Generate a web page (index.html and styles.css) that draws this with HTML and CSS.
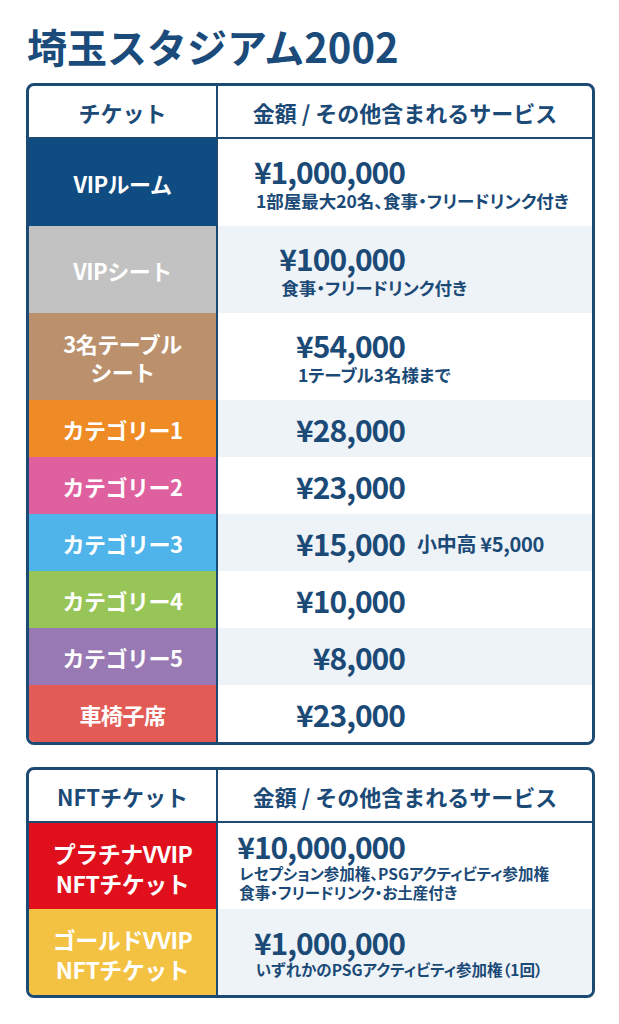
FILE: index.html
```html
<!DOCTYPE html>
<html lang="ja">
<head>
<meta charset="utf-8">
<title>埼玉スタジアム2002</title>
<link rel="stylesheet" href="styles.css">
</head>
<body>
<main class="page">
  <h1 class="title">埼玉スタジアム2002</h1>

  <section class="ticket-table">
    <div class="head-cell head-left">チケット</div>
    <div class="head-cell">金額 / その他含まれるサービス</div>

    <div class="label tall c-navy">VIPルーム</div>
    <div class="info tall">
      <div class="pricebox"><div class="stack"><div class="price">¥1,000,000</div><div class="note">1部屋最大20名、食事・フリードリンク付き</div></div></div>
    </div>

    <div class="label tall c-grey">VIPシート</div>
    <div class="info tall alt">
      <div class="pricebox"><div class="stack"><div class="price">¥100,000</div><div class="note">食事・フリードリンク付き</div></div></div>
    </div>

    <div class="label tall two-line c-tan">3名テーブル<br>シート</div>
    <div class="info tall">
      <div class="pricebox"><div class="stack"><div class="price">¥54,000</div><div class="note">1テーブル3名様まで</div></div></div>
    </div>

    <div class="label c-orange">カテゴリー1</div>
    <div class="info alt"><div class="pricebox"><div class="price">¥28,000</div></div></div>

    <div class="label c-pink">カテゴリー2</div>
    <div class="info"><div class="pricebox"><div class="price">¥23,000</div></div></div>

    <div class="label c-sky">カテゴリー3</div>
    <div class="info alt"><div class="pricebox"><div class="price">¥15,000</div></div><span class="extra">小中高 ¥5,000</span></div>

    <div class="label c-green">カテゴリー4</div>
    <div class="info"><div class="pricebox"><div class="price">¥10,000</div></div></div>

    <div class="label c-purple">カテゴリー5</div>
    <div class="info alt"><div class="pricebox"><div class="price">¥8,000</div></div></div>

    <div class="label c-red">車椅子席</div>
    <div class="info"><div class="pricebox"><div class="price">¥23,000</div></div></div>
  </section>

  <section class="ticket-table nft">
    <div class="head-cell head-left">NFTチケット</div>
    <div class="head-cell">金額 / その他含まれるサービス</div>

    <div class="label tall two-line nft-label c-platinum">プラチナVVIP<br>NFTチケット</div>
    <div class="info tall">
      <div class="pricebox"><div class="stack"><div class="price">¥10,000,000</div><div class="note small">レセプション参加権、PSGアクティビティ参加権<br>食事・フリードリンク・お土産付き</div></div></div>
    </div>

    <div class="label tall two-line nft-label c-gold">ゴールドVVIP<br>NFTチケット</div>
    <div class="info tall alt">
      <div class="pricebox"><div class="stack"><div class="price">¥1,000,000</div><div class="note small">いずれかのPSGアクティビティ参加権（1回）</div></div></div>
    </div>
  </section>
</main>
</body>
</html>
```

FILE: styles.css
```css
* { box-sizing: border-box; }

html, body {
  margin: 0;
  padding: 0;
  background: #ffffff;
}

body {
  font-family: "Noto Sans CJK JP", "Noto Sans", sans-serif;
  font-weight: 700;
  color: #1b4a77;
}

.page {
  width: 619px;
  padding: 19px 24px 0 26px;
}

.title {
  margin: 0 0 10px 1px;
  font-size: 40px;
  line-height: 54px;
  font-weight: 700;
  color: #1a4b7b;
}

.ticket-table {
  display: grid;
  grid-template-columns: 189px 1fr;
  border: 3px solid #1c4a74;
  border-radius: 8px;
  overflow: hidden;
  background: #ffffff;
}

.ticket-table.nft {
  margin-top: 22px;
}

.head-cell {
  height: 53px;
  border-bottom: 2px solid #1c4a74;
  display: flex;
  align-items: center;
  justify-content: center;
  font-size: 22px;
  color: #1b4a77;
}

.head-left,
.label {
  border-right: 2px solid #1c4a74;
}

.label {
  height: 57px;
  display: flex;
  align-items: center;
  justify-content: center;
  text-align: center;
  color: #ffffff;
  font-size: 22px;
  letter-spacing: -0.5px;
  line-height: 28px;
}

.label.tall,
.info.tall {
  height: 87px;
}

.nft .label.tall,
.nft .info.tall {
  height: 86px;
}

.nft-label {
  font-size: 23px;
  line-height: 30px;
  padding-top: 4px;
}

.info {
  height: 57px;
  display: flex;
  align-items: center;
  background: #ffffff;
}

.info.alt {
  background: #eef3f7;
}

.pricebox {
  width: 187px;
  flex: none;
  display: flex;
  justify-content: flex-end;
}

.stack {
  display: flex;
  flex-direction: column;
}

.price {
  font-size: 30px;
  line-height: 32px;
  letter-spacing: -1px;
  color: #1b4a77;
  white-space: nowrap;
}

.note {
  width: 0;
  white-space: nowrap;
  font-size: 17.5px;
  line-height: 21px;
  margin-top: 3px;
  padding-left: 2px;
  font-feature-settings: "palt";
}

.note.small {
  font-size: 15.5px;
  line-height: 19px;
  margin-top: 2px;
}

.extra {
  margin-left: 12px;
  font-size: 20px;
  letter-spacing: -0.3px;
  padding-top: 2px;
  white-space: nowrap;
}

.c-navy { background: #0f4c81; }
.c-grey { background: #c2c2c2; }
.c-tan { background: #bb916d; }
.c-orange { background: #ef8b25; }
.c-pink { background: #de609f; }
.c-sky { background: #4eb4ea; }
.c-green { background: #98c557; }
.c-purple { background: #9879b3; }
.c-red { background: #e35b55; }
.c-platinum { background: #df0f1c; }
.c-gold { background: #f3c242; }
```
